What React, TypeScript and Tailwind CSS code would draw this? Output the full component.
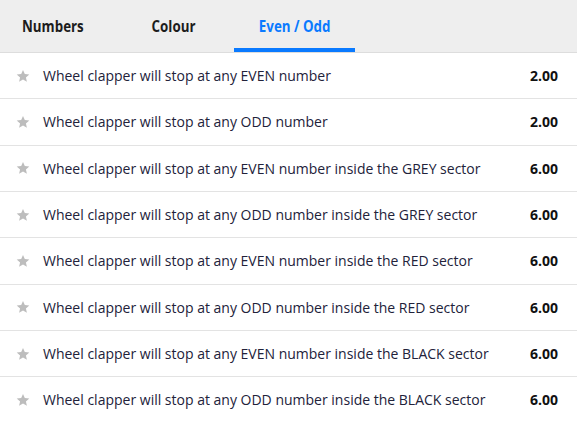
import React from 'react'

const rows = [
  { label: 'Wheel clapper will stop at any EVEN number', odds: '2.00' },
  { label: 'Wheel clapper will stop at any ODD number', odds: '2.00' },
  { label: 'Wheel clapper will stop at any EVEN number inside the GREY sector', odds: '6.00' },
  { label: 'Wheel clapper will stop at any ODD number inside the GREY sector', odds: '6.00' },
  { label: 'Wheel clapper will stop at any EVEN number inside the RED sector', odds: '6.00' },
  { label: 'Wheel clapper will stop at any ODD number inside the RED sector', odds: '6.00' },
  { label: 'Wheel clapper will stop at any EVEN number inside the BLACK sector', odds: '6.00' },
  { label: 'Wheel clapper will stop at any ODD number inside the BLACK sector', odds: '6.00' },
]

function Star() {
  return (
    <svg width="14" height="14" viewBox="0 0 24 24" className="shrink-0">
      <path
        d="M12 1.5l3.1 7.1 7.7.7-5.8 5.1 1.7 7.6L12 18l-6.7 4 1.7-7.6-5.8-5.1 7.7-.7z"
        fill="#bdbdbd"
      />
    </svg>
  )
}

export default function App() {
  const tab = 'inline-block scale-x-[0.86] text-[15.5px] font-bold'
  return (
    <div className="w-[577px] h-[423px] overflow-hidden bg-white font-['Open_Sans',sans-serif]">
      <div className="flex h-[53px] bg-[#eeeeee] border-b border-[#dddddd]">
        <button className="w-[113px] pr-2 pt-[1px] text-[#1c1c1c]">
          <span className={tab}>Numbers</span>
        </button>
        <button className="w-[121px] pt-[1px] text-[#1c1c1c]">
          <span className={tab}>Colour</span>
        </button>
        <button className="relative w-[121px] pt-[1px] text-[#0a7aff]">
          <span className={tab}>Even / Odd</span>
          <span className="absolute left-0 right-0 bottom-0 h-1 bg-[#0a7aff]" />
        </button>
      </div>
      {rows.map((r, i) => (
        <div
          key={i}
          className="flex items-center h-[46.33px] border-b border-[#e3e3e3] pl-[16px] pr-[19px]"
        >
          <Star />
          <span className="ml-[13px] flex-1 text-[14px] text-[#22223a]">{r.label}</span>
          <span className="text-[14px] font-bold text-[#111111]">{r.odds}</span>
        </div>
      ))}
    </div>
  )
}
